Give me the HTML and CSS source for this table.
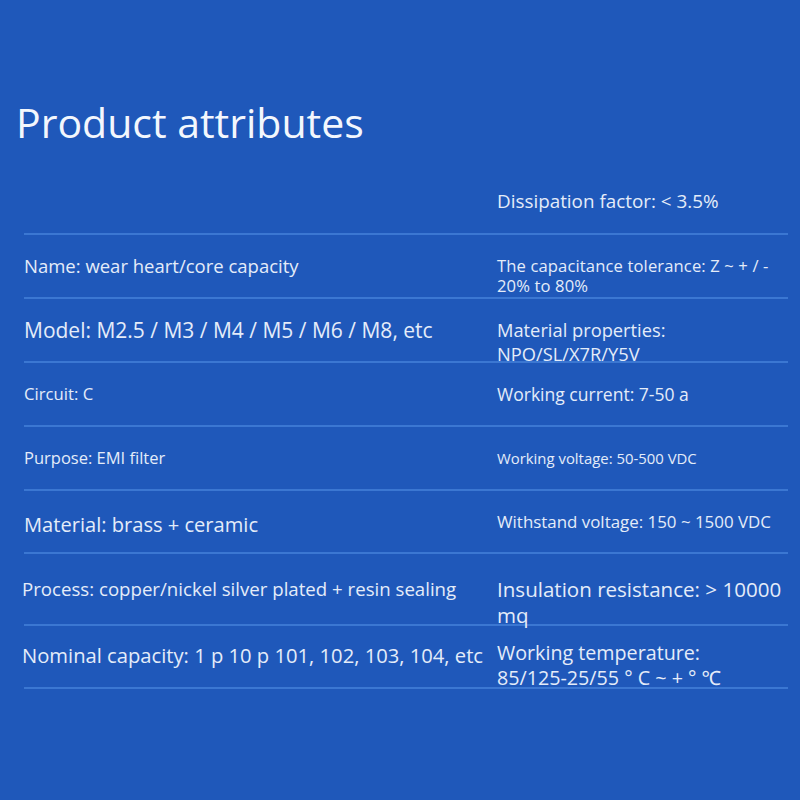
FILE: index.html
```html
<!DOCTYPE html>
<html lang="en">
<head>
<meta charset="utf-8">
<title>Product attributes</title>
<link rel="stylesheet" href="styles.css">
</head>
<body>
<main class="sheet">
  <h1 class="title">Product attributes</h1>
  <div class="table">
    <div class="row r0">
      <div class="cell"></div>
      <div class="cell c-dis">Dissipation factor: &lt; 3.5%</div>
    </div>
    <div class="row r1">
      <div class="cell c-name">Name: wear heart/core capacity</div>
      <div class="cell c-tol">The capacitance tolerance: Z ~ + / -<br>20% to 80%</div>
    </div>
    <div class="row r2">
      <div class="cell c-model">Model: M2.5 / M3 / M4 / M5 / M6 / M8, etc</div>
      <div class="cell c-mat">Material properties:<br>NPO/SL/X7R/Y5V</div>
    </div>
    <div class="row r3">
      <div class="cell c-circ">Circuit: C</div>
      <div class="cell c-cur">Working current: 7-50 a</div>
    </div>
    <div class="row r4">
      <div class="cell c-purp">Purpose: EMI filter</div>
      <div class="cell c-volt">Working voltage: 50-500 VDC</div>
    </div>
    <div class="row r5">
      <div class="cell c-matl">Material: brass + ceramic</div>
      <div class="cell c-with">Withstand voltage: 150 ~ 1500 VDC</div>
    </div>
    <div class="row r6">
      <div class="cell c-proc">Process: copper/nickel silver plated + resin sealing</div>
      <div class="cell c-ins">Insulation resistance: &gt; 10000<br>mq</div>
    </div>
    <div class="row r7">
      <div class="cell c-nom">Nominal capacity: 1 p 10 p 101, 102, 103, 104, etc</div>
      <div class="cell c-temp">Working temperature:<br>85/125-25/55 ° C ~ + ° ℃</div>
    </div>
  </div>
</main>
</body>
</html>
```

FILE: styles.css
```css
html, body {
  margin: 0;
  padding: 0;
}

body {
  background: #1f58ba;
  font-family: "Open Sans", "Noto Sans", sans-serif;
  color: #e4ecf9;
}

.sheet {
  width: 800px;
  height: 800px;
  overflow: hidden;
}

.title {
  box-sizing: border-box;
  height: 168px;
  margin: 0;
  padding: 94px 0 0 16px;
  font-size: 41px;
  font-weight: 400;
  line-height: 56px;
  color: #f3f7fd;
}

.table {
  margin-left: 24px;
  width: 764px;
}

.row {
  display: grid;
  grid-template-columns: 473px 1fr;
  box-sizing: border-box;
  height: var(--h);
  border-bottom: 2px solid #3b77d2;
}

.r0 { --h: 67px; }
.r1, .r2, .r3, .r4 { --h: 64px; }
.r5 { --h: 63px; }
.r6 { --h: 72px; }
.r7 { --h: 63px; }

.cell {
  --lh: 24px;
  padding-top: calc((var(--h) - 2px - var(--lh)) / 2 + var(--dy, 0px));
  line-height: var(--lh);
  white-space: nowrap;
}

.c-name { font-size: 18.5px; --lh: 24px; }
.c-model { font-size: 21px; --lh: 26px; }
.c-circ { font-size: 16.7px; --lh: 22px; }
.c-purp { font-size: 16.5px; --lh: 22px; }
.c-matl { font-size: 20.1px; --lh: 26px; --dy: 3px; }
.c-proc { font-size: 18.65px; --lh: 24px; margin-left: -2px; }
.c-nom { font-size: 20.2px; --lh: 26px; margin-left: -2px; --dy: -2px; }

.c-dis { font-size: 18.85px; --lh: 24px; }
.c-tol { font-size: 16.6px; --lh: 20px; letter-spacing: 0.12px; }
.c-mat { font-size: 18.3px; --lh: 24px; }
.c-cur { font-size: 17.55px; --lh: 22px; }
.c-volt { font-size: 14.9px; --lh: 20px; }
.c-with { font-size: 16.9px; --lh: 22px; }
.c-ins { font-size: 20.55px; --lh: 26px; }
.c-temp { font-size: 19.7px; --lh: 25px; --dy: -4px; }
```
